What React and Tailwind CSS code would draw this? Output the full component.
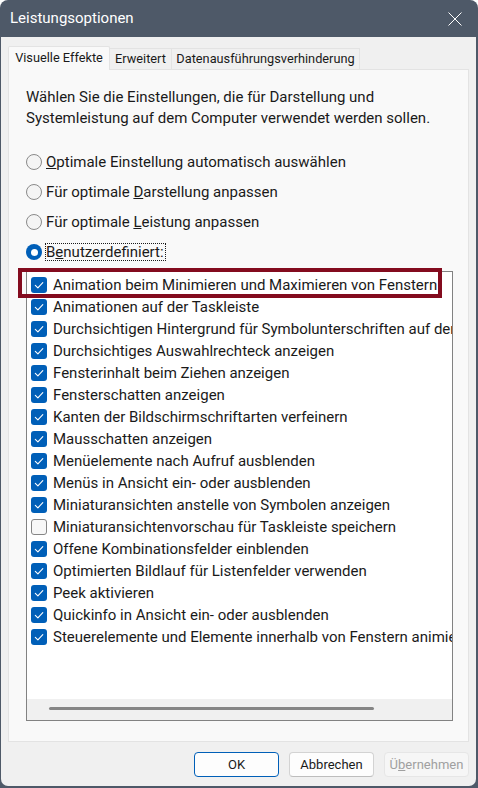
const effects = [
  ["Animation beim Minimieren und Maximieren von Fenstern", true],
  ["Animationen auf der Taskleiste", true],
  ["Durchsichtigen Hintergrund für Symbolunterschriften auf dem Desktop", true],
  ["Durchsichtiges Auswahlrechteck anzeigen", true],
  ["Fensterinhalt beim Ziehen anzeigen", true],
  ["Fensterschatten anzeigen", true],
  ["Kanten der Bildschirmschriftarten verfeinern", true],
  ["Mausschatten anzeigen", true],
  ["Menüelemente nach Aufruf ausblenden", true],
  ["Menüs in Ansicht ein- oder ausblenden", true],
  ["Miniaturansichten anstelle von Symbolen anzeigen", true],
  ["Miniaturansichtenvorschau für Taskleiste speichern", false],
  ["Offene Kombinationsfelder einblenden", true],
  ["Optimierten Bildlauf für Listenfelder verwenden", true],
  ["Peek aktivieren", true],
  ["Quickinfo in Ansicht ein- oder ausblenden", true],
  ["Steuerelemente und Elemente innerhalb von Fenstern animieren", true],
]

function Radio({ checked, children, focused }) {
  return (
    <div className="h-[30px] flex items-center gap-[3px]">
      {checked ? (
        <span className="w-[16px] h-[16px] rounded-full bg-[#005fb8] flex items-center justify-center shrink-0">
          <span className="w-[7px] h-[7px] rounded-full bg-white" />
        </span>
      ) : (
        <span className="w-[16px] h-[16px] rounded-full border border-[#8a8a8a] bg-[#f4f4f4] shrink-0" />
      )}
      <span
        className={`border leading-[16px] pr-px ${focused ? "border-dotted border-[#1a1a1a]" : "border-transparent"}`}
      >
        {children}
      </span>
    </div>
  )
}

function Check({ checked }) {
  if (!checked) {
    return <span className="w-[16px] h-[16px] rounded-[3px] border border-[#858585] bg-[#f7f7f7] shrink-0" />
  }
  return (
    <span className="w-[16px] h-[16px] rounded-[3px] bg-[#005fb8] flex items-center justify-center shrink-0">
      <svg width="16" height="16" viewBox="0 0 16 16" fill="none">
        <path d="M4.3 8.3 L6.9 10.8 L11.8 5.6" stroke="white" strokeWidth="1.1" strokeLinecap="round" strokeLinejoin="round" />
      </svg>
    </span>
  )
}

export default function App() {
  return (
    <div className="w-[478px] h-[788px] bg-[#4e5968] rounded-t-[8px] flex flex-col font-['Roboto',sans-serif] text-[#1a1a1a]">
      {/* Title bar */}
      <div className="h-[37px] shrink-0 flex items-center justify-between pl-[10px] pr-[16px] text-white text-[15px]">
        <span>Leistungsoptionen</span>
        <svg width="14" height="14" viewBox="0 0 14 14" fill="none">
          <path d="M0.5 0.5 L13.5 13.5 M13.5 0.5 L0.5 13.5" stroke="white" strokeWidth="1" />
        </svg>
      </div>

      {/* Body */}
      <div className="flex-1 ml-px mr-[2px] mb-[2px] bg-[#f0f0f0] rounded-b-[7px] flex flex-col px-[7px] pt-[9px]">
        {/* Tabs */}
        <div className="h-[23px] flex items-end text-[12.75px]">
          <div className="relative z-10 h-[24px] -mb-px w-[102px] border border-b-0 border-[#e3e3e3] bg-[#f9f9f9] rounded-t-[2px] flex items-center justify-center pb-[2px]">
            Visuelle Effekte
          </div>
          <div className="h-[21px] w-[62px] border border-l-0 border-b-0 border-[#e3e3e3] flex items-center justify-center">
            Erweitert
          </div>
          <div className="h-[21px] w-[188px] border border-l-0 border-b-0 border-[#e3e3e3] flex items-center justify-center">
            Datenausführungsverhinderung
          </div>
        </div>

        {/* Panel */}
        <div className="h-[673px] border border-[#e3e3e3] bg-[#f9f9f9] pl-[17px] pt-[17px] text-[15px]">
          <p className="leading-[21px]">
            Wählen Sie die Einstellungen, die für Darstellung und
            <br />
            Systemleistung auf dem Computer verwendet werden sollen.
          </p>

          <div className="mt-[18px]">
            <Radio>
              <u>O</u>ptimale Einstellung automatisch auswählen
            </Radio>
            <Radio>
              Für optimale <u>D</u>arstellung anpassen
            </Radio>
            <Radio>
              Für optimale <u>L</u>eistung anpassen
            </Radio>
            <Radio checked focused>
              B<u>e</u>nutzerdefiniert:
            </Radio>
          </div>

          {/* List */}
          <div className="relative mt-[4px] w-[427px] h-[450px]">
            <div className="h-full border border-[#828282] bg-white overflow-hidden flex flex-col">
              <div className="flex-1 pt-[2px]">
                {effects.map(([label, on]) => (
                  <div key={label} className="h-[22px] flex items-center pl-[4px] gap-[6px] whitespace-nowrap">
                    <Check checked={on} />
                    <span>{label}</span>
                  </div>
                ))}
              </div>
              <div className="h-[21px] bg-[#f0f0f0] pt-[8px] pl-[22px]">
                <div className="w-[325px] h-[3px] rounded-full bg-[#858585]" />
              </div>
            </div>
            <div className="absolute left-[-8px] top-[-3px] w-[424px] h-[30px] border-4 border-[#830b1e]" />
          </div>
        </div>

        {/* Buttons */}
        <div className="mt-[10px] flex justify-end gap-[10px] text-[13px]">
          <button className="w-[85px] h-[25px] rounded-[4px] border border-[#005fb8] bg-[#fdfdfd]">OK</button>
          <button className="w-[85px] h-[25px] rounded-[4px] border border-[#d3d3d3] border-b-[#bdbdbd] bg-[#fdfdfd]">
            Abbrechen
          </button>
          <button className="w-[85px] h-[25px] rounded-[4px] border border-[#e6e6e6] bg-[#f6f6f6] text-[#a0a0a0]">
            Ü<u>b</u>ernehmen
          </button>
        </div>
      </div>
    </div>
  )
}
